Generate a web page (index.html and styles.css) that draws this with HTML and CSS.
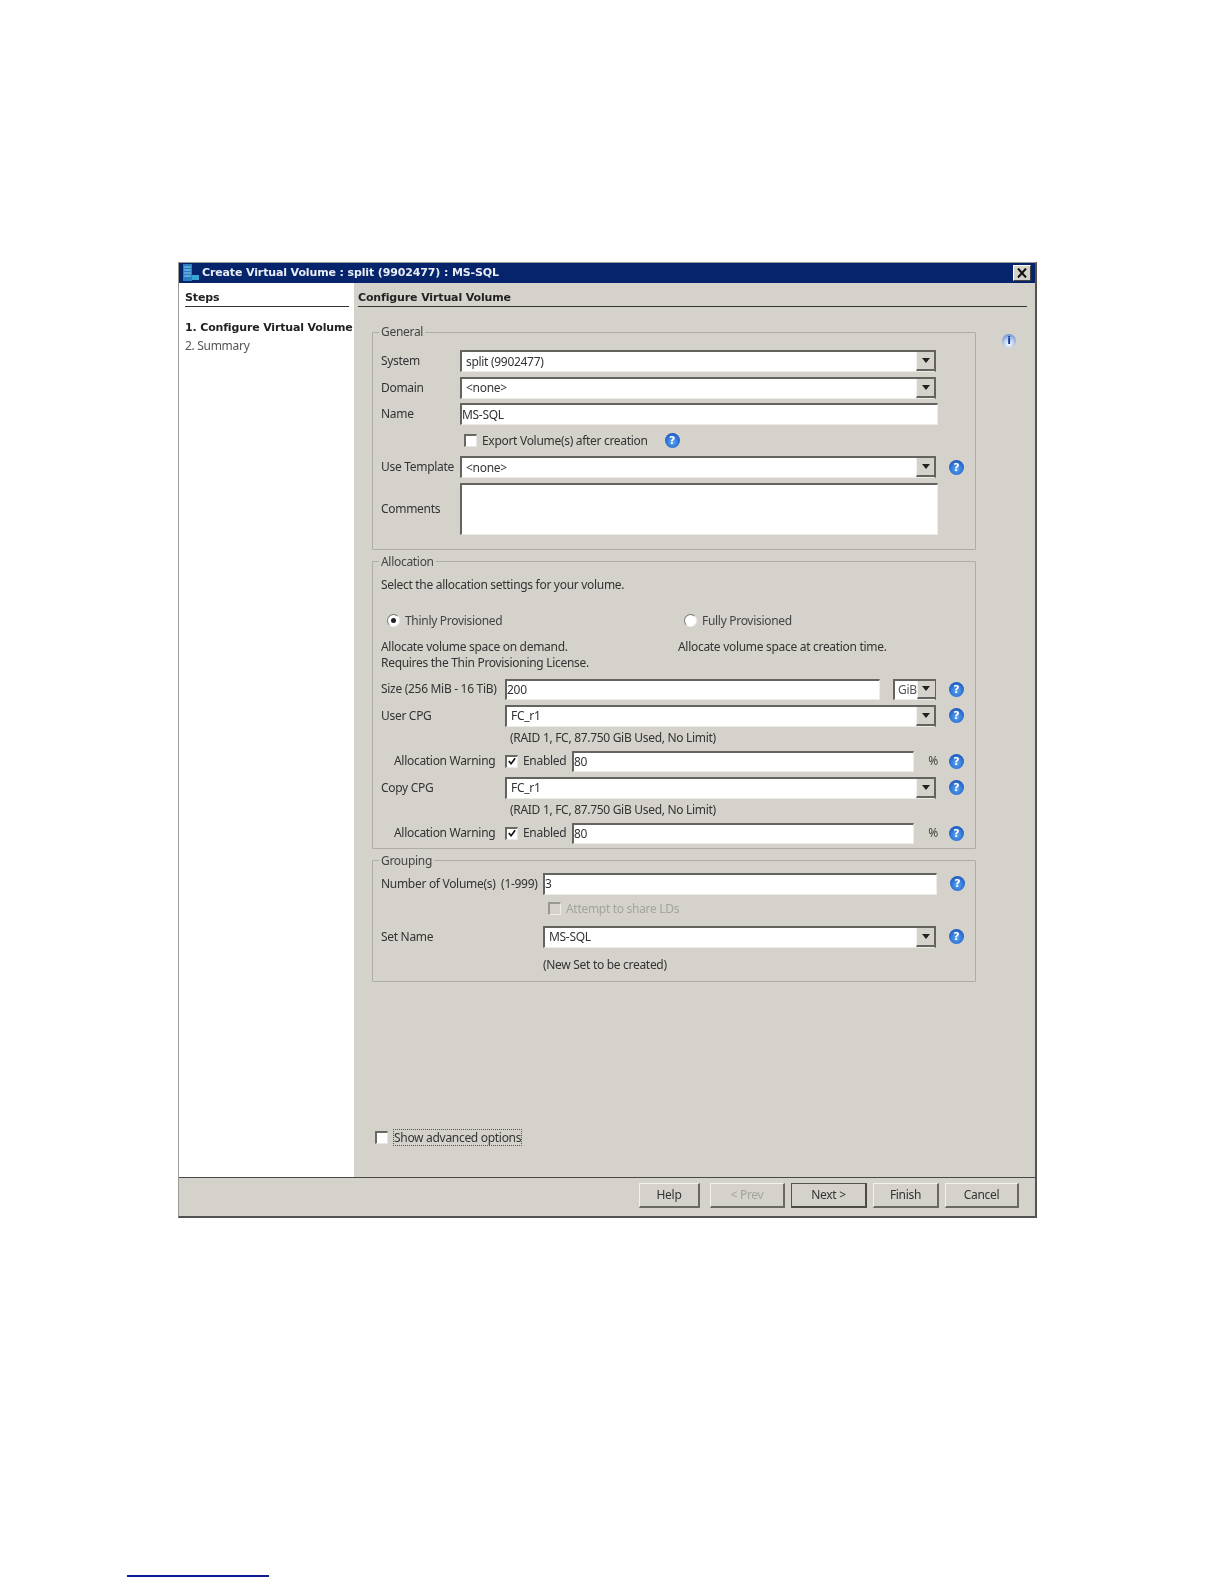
FILE: index.html
```html
<!DOCTYPE html>
<html lang="en">
<head>
<meta charset="utf-8">
<title>Create Virtual Volume</title>
<link rel="stylesheet" href="styles.css">
</head>
<body>
<div class="window">
  <div class="titlebar">
    <svg class="app-icon" width="18" height="18" viewBox="0 0 18 18"><rect x="1" y="0" width="9" height="17" fill="#2a7fc4"/><path d="M2 3h7M2 6h7M2 9h7M2 12h7" stroke="#8fd0f0" stroke-width="1"/><rect x="10" y="11" width="7" height="5" fill="#35a5d8"/></svg>
    <span class="title-text">Create Virtual Volume : split (9902477) : MS-SQL</span>
    <span class="close"><svg width="12" height="10" viewBox="0 0 12 10"><path d="M2 0.5L10 9.5M10 0.5L2 9.5" stroke="#111" stroke-width="2"/></svg></span>
  </div>
  <div class="body">
    <aside class="sidebar">
      <div class="heading">Steps</div>
      <div class="step current">1. Configure Virtual Volume</div>
      <div class="step">2. Summary</div>
    </aside>
    <main class="main">
      <div class="heading main-heading">Configure Virtual Volume</div>
      <div class="content">
        <div class="groups">
          <fieldset class="group general">
            <legend>General</legend>
            <div class="row"><span class="lbl lbl-g">System</span><div class="field combo w476"><span class="val">split (9902477)</span><span class="arrow"></span></div></div>
            <div class="row"><span class="lbl lbl-g">Domain</span><div class="field combo w476"><span class="val">&lt;none&gt;</span><span class="arrow"></span></div></div>
            <div class="row"><span class="lbl lbl-g">Name</span><div class="field text w478"><span class="val tight">MS-SQL</span></div></div>
            <div class="row export"><span class="check"></span><span class="lbl">Export Volume(s) after creation</span><span class="help export-help">?</span></div>
            <div class="row"><span class="lbl lbl-g">Use Template</span><div class="field combo w476"><span class="val">&lt;none&gt;</span><span class="arrow"></span></div><span class="help">?</span></div>
            <div class="row comments"><span class="lbl lbl-g">Comments</span><div class="field text w478 area"></div></div>
          </fieldset>

          <fieldset class="group allocation">
            <legend>Allocation</legend>
            <div class="line">Select the allocation settings for your volume.</div>
            <div class="options">
              <div class="option-head"><span class="radio on"></span><span>Thinly Provisioned</span></div>
              <div class="option-head"><span class="radio"></span><span>Fully Provisioned</span></div>
              <div class="line">Allocate volume space on demand.<br>Requires the Thin Provisioning License.</div>
              <div class="line">Allocate volume space at creation time.</div>
            </div>
            <div class="row size-row"><span class="lbl lbl-a">Size (256 MiB - 16 TiB)</span><div class="field text w375"><span class="val tight">200</span></div><div class="field combo unit"><span class="val unit-val">GiB</span><span class="arrow"></span></div><span class="help">?</span></div>
            <div class="row cpg-row"><span class="lbl lbl-a">User CPG</span><div class="field combo w431"><span class="val">FC_r1</span><span class="arrow"></span></div><span class="help">?</span></div>
            <div class="line note">(RAID 1, FC, 87.750 GiB Used, No Limit)</div>
            <div class="row warn-row"><span class="lbl lbl-a indent">Allocation Warning</span><span class="check checked"><svg width="11" height="11" viewBox="0 0 11 11"><path d="M2 5l2.5 3L9 2" fill="none" stroke="#111" stroke-width="1.8"/></svg></span><span class="enabled">Enabled</span><div class="field text w342"><span class="val tight">80</span></div><span class="pct">%</span><span class="help">?</span></div>
            <div class="row cpg-row"><span class="lbl lbl-a">Copy CPG</span><div class="field combo w431"><span class="val">FC_r1</span><span class="arrow"></span></div><span class="help">?</span></div>
            <div class="line note">(RAID 1, FC, 87.750 GiB Used, No Limit)</div>
            <div class="row warn-row"><span class="lbl lbl-a indent">Allocation Warning</span><span class="check checked"><svg width="11" height="11" viewBox="0 0 11 11"><path d="M2 5l2.5 3L9 2" fill="none" stroke="#111" stroke-width="1.8"/></svg></span><span class="enabled">Enabled</span><div class="field text w342"><span class="val tight">80</span></div><span class="pct">%</span><span class="help">?</span></div>
          </fieldset>

          <fieldset class="group grouping">
            <legend>Grouping</legend>
            <div class="row"><span class="lbl lbl-n">Number of Volume(s)&nbsp; (1-999)</span><div class="field text w394"><span class="val tight">3</span></div><span class="help">?</span></div>
            <div class="row attempt"><span class="check disabled"></span><span class="lbl muted">Attempt to share LDs</span></div>
            <div class="row setname"><span class="lbl lbl-n">Set Name</span><div class="field combo w393"><span class="val">MS-SQL</span><span class="arrow"></span></div><span class="help">?</span></div>
            <div class="line set-note">(New Set to be created)</div>
          </fieldset>
        </div>
        <span class="info">i</span>
      </div>
      <div class="advanced"><span class="check"></span><span class="focus">Show advanced options</span></div>
    </main>
  </div>
  <footer class="footer">
    <span class="btn b-help">Help</span>
    <span class="btn b-prev off">&lt; Prev</span>
    <span class="btn b-next default">Next &gt;</span>
    <span class="btn b-finish">Finish</span>
    <span class="btn b-cancel">Cancel</span>
  </footer>
</div>
<div class="footnote-rule"></div>
</body>
</html>
```
FILE: styles.css
```css
* { box-sizing: border-box; }
html, body { margin: 0; padding: 0; background: #fff; }
body { width: 1224px; height: 1584px; overflow: hidden; font: 12px/16px "Noto Sans", Tahoma, sans-serif; letter-spacing: -.3px; color: #2b2b2b; }

.window { width: 859px; height: 956px; margin: 262px 0 0 178px; display: flex; flex-direction: column; background: #d5d2cc; border: 1px solid #9c9a94; border-right: 2px solid #55534f; border-bottom: 2px solid #55534f; filter: blur(.5px); }

.titlebar { height: 20px; flex: none; background: #06246c; color: #e8ecf4; display: flex; align-items: center; padding: 0 4px 0 3px; }
.app-icon { flex: none; margin-right: 2px; }
.title-text { font: bold 11px/16px "DejaVu Sans", sans-serif; letter-spacing: -.13px; flex: 1; white-space: nowrap; }
.close { width: 18px; height: 16px; background: #d5d2cc; border: 1px solid #fff; border-right-color: #444; border-bottom-color: #444; display: flex; align-items: center; justify-content: center; }

.body { flex: 1; display: flex; min-height: 0; }
.sidebar { width: 175px; flex: none; background: #fff; padding: 7px 5px 0 6px; }
.heading { font: bold 11px/16px "DejaVu Sans", sans-serif; letter-spacing: -.13px; color: #222; border-bottom: 1px solid #333; height: 17px; white-space: nowrap; }
.step { line-height: 18px; white-space: nowrap; color: #555; }
.step.current { margin-top: 12px; font: bold 11px/18px "DejaVu Sans", sans-serif; letter-spacing: -.15px; color: #222; }

.main { flex: 1; display: flex; flex-direction: column; padding: 7px 8px 0 4px; min-width: 0; }
.content { display: flex; margin: 17px 0 0 14px; }
.groups { width: 604px; flex: none; display: flex; flex-direction: column; gap: 4px; }
.info { width: 14px; height: 14px; margin: 10px 0 0 26px; border-radius: 50%; background: radial-gradient(circle at 50% 70%, #fff 0, #bcd0ee 40%, #4a74c8 100%); color: #123a9a; font: bold 11px/14px "DejaVu Sans", sans-serif; text-align: center; flex: none; }

.group { margin: 0; min-width: 0; border: 1px solid #aeaca6; padding: 10px 0 0 8px; border-radius: 1px; }
.group legend { padding: 0 2px; margin-left: -2px; line-height: 16px; color: #444; }
.general { padding-bottom: 14px; display: flex; flex-direction: column; gap: 4.5px; }
.allocation { padding-top: 7px; padding-bottom: 4px; }
.grouping { padding-top: 4px; padding-bottom: 8px; }

.row { display: flex; align-items: center; height: 22px; }
.lbl { white-space: nowrap; color: #333; flex: none; }
.lbl-g { width: 79px; }
.lbl-a { width: 124px; }
.lbl-n { width: 162px; }
.indent { width: 111px; margin-left: 13px; }

.field { height: 100%; background: #fff; border-top: 2px solid #65635e; border-left: 2px solid #65635e; border-right: 1px solid #eeece8; border-bottom: 1px solid #eeece8; display: flex; align-items: center; flex: none; }
.combo { border-right: 2px solid #65635e; }
.val { flex: 1; padding-left: 4px; white-space: nowrap; color: #333; }
.val.tight { padding-left: 0; }
.arrow { width: 18px; height: 100%; background: #d5d2cc; border-bottom: 2px solid #65635e; border-left: 1px solid #f2f0ec; display: flex; align-items: center; justify-content: center; flex: none; }
.arrow::after { content: ""; border: 4px solid transparent; border-top: 5px solid #222; border-bottom: 0; }
.w476 { width: 476px; }
.w478 { width: 478px; }
.w375 { width: 375px; }
.w431 { width: 431px; }
.w342 { width: 342px; }
.w394 { width: 394px; }
.w393 { width: 393px; }
.unit { width: 43px; margin-left: 13px; background: #fff; }
.unit-val { padding-left: 3px; color: #555; }

.help { width: 15px; height: 15px; border-radius: 50%; flex: none; margin-left: 13px; background: radial-gradient(circle at 50% 60%, #5fa8f2 0, #2c6fd4 55%, #173f9c 100%); color: #fff; font: bold 11px/15px "DejaVu Sans", sans-serif; letter-spacing: 0; text-align: center; }
.export { padding-left: 83px; }
.export .lbl { margin-left: 5px; }
.export-help { margin-left: 17px; }
.comments { height: 52px; }
.comments .area { height: 52px; }

.check { width: 13px; height: 13px; flex: none; background: #fff; border-top: 2px solid #6a6863; border-left: 2px solid #6a6863; border-right: 1px solid #e8e6e2; border-bottom: 1px solid #e8e6e2; display: flex; align-items: center; justify-content: center; }
.check.disabled { background: #d5d2cc; border-color: #9a9892 #f0eee9 #f0eee9 #9a9892; }
.muted { color: #a5a39d; margin-left: 5px; }
.radio { width: 13px; height: 13px; border-radius: 50%; flex: none; background: #fff; border: 1.5px solid #777; border-right-color: #eee; border-bottom-color: #eee; display: flex; align-items: center; justify-content: center; }
.radio.on::after { content: ""; width: 5px; height: 5px; border-radius: 50%; background: #222; }

.line { color: #333; white-space: nowrap; }
.options { display: grid; grid-template-columns: 297px 1fr; margin-top: 20px; }
.option-head { display: flex; align-items: center; gap: 5px; height: 16px; padding-left: 6px; margin-bottom: 10px; color: #444; }
.size-row { height: 21px; margin-top: 8px; }
.cpg-row { margin-top: 5px; }
.note { padding-left: 129px; margin-top: 3px; }
.warn-row { height: 21px; margin-top: 5px; }
.enabled { width: 49px; margin-left: 5px; flex: none; color: #333; }
.pct { width: 24px; text-align: right; flex: none; color: #444; }
.warn-row .help { margin-left: 11px; }

.attempt { height: 16px; margin-top: 6px; padding-left: 167px; }
.setname { margin-top: 9px; }
.set-note { padding-left: 162px; margin-top: 9px; }

.advanced { margin-top: auto; display: flex; align-items: center; margin-left: 17px; margin-bottom: 31px; height: 17px; gap: 5px; }
.focus { border: 1px dotted #555; line-height: 15px; white-space: nowrap; color: #333; }

.footer { flex: none; height: 39px; display: flex; justify-content: flex-end; padding: 5px 16px 0 0; gap: 6px; border-top: 1px solid #4a4845; }
.btn { height: 25px; display: flex; align-items: center; justify-content: center; background: #d5d2cc; border: 1px solid #f4f2ee; border-right: 2px solid #6a6863; border-bottom: 2px solid #6a6863; color: #333; }
.b-help { width: 61px; margin-right: 4px; }
.b-prev { width: 75px; }
.b-next { width: 76px; }
.b-finish { width: 66px; }
.b-cancel { width: 74px; }
.off { color: #a5a39d; }
.default { border: 1px solid #55534f; border-right: 2px solid #4c4a46; border-bottom: 2px solid #4c4a46; }

.footnote-rule { width: 142px; height: 2px; margin: 357px 0 0 127px; background: #0b1a8c; }
```
